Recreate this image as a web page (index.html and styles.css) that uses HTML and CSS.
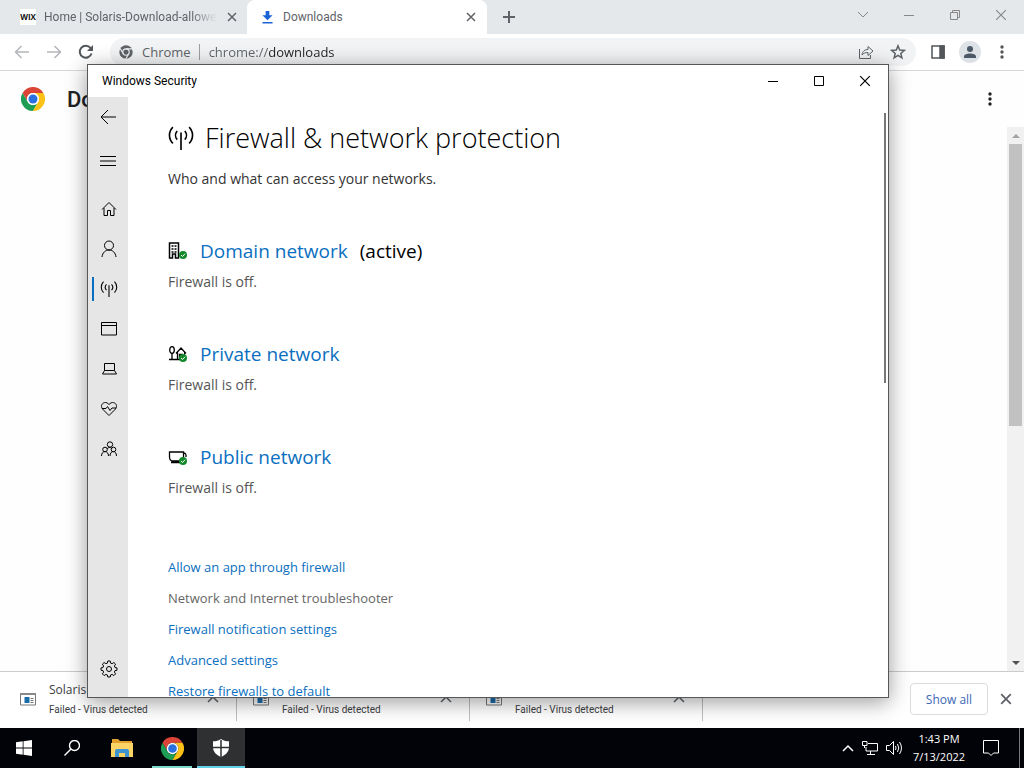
FILE: index.html
```html
<!DOCTYPE html>
<html lang="en">
<head>
    <meta charset="UTF-8">
    <meta name="viewport" content="width=device-width, initial-scale=1.0">
    <title>Downloads</title>
    <link rel="stylesheet" href="styles.css">
</head>
<body>
    <!-- Shared icons -->
    <svg class="hidden">
        <symbol id="chrome" viewBox="0 0 48 48">
            <path fill="#db4437" d="M24 12H44.8A24 24 0 0 0 3.2 12L13.6 30A12 12 0 0 1 24 12z"/>
            <path fill="#1e9e54" d="M13.6 30L3.2 12A24 24 0 0 0 24 48L34.4 30A12 12 0 0 1 13.6 30z"/>
            <path fill="#fbc116" d="M34.4 30L24 48A24 24 0 0 0 44.8 12H24A12 12 0 0 1 34.4 30z"/>
            <circle cx="24" cy="24" r="12" fill="#fff"/>
            <circle cx="24" cy="24" r="9" fill="#2a70e0"/>
        </symbol>
        <symbol id="close" viewBox="0 0 10 10"><path d="M1 1l8 8M9 1l-8 8"/></symbol>
        <symbol id="dots" viewBox="0 0 4 16"><g fill="currentColor" stroke="none"><circle cx="2" cy="3" r="1.7"/><circle cx="2" cy="8" r="1.7"/><circle cx="2" cy="13" r="1.7"/></g></symbol>
        <symbol id="chevron-up" viewBox="0 0 12 8"><path d="M1 7l5-5 5 5"/></symbol>
        <symbol id="antenna" viewBox="0 0 24 22">
            <path d="M12 6v16M8.500 4.500a6 6 0 0 0 0 8M15.500 4.500a6 6 0 0 1 0 8M4.500 1a10.500 10.500 0 0 0 0 15M19.500 1a10.500 10.500 0 0 1 0 15"/>
        </symbol>
        <symbol id="ok" viewBox="0 0 8 8"><circle cx="4" cy="4" r="4" fill="#14892c" stroke="none"/><path d="M2 4l1.500 1.500L6 2.800" stroke="#fff" fill="none"/></symbol>
        <symbol id="exe" viewBox="0 0 16 13">
            <path d="M.5.5h15v11.500H.5z" fill="#fff" stroke="#777"/><path d="M0 1h16" stroke="#888" stroke-width="2"/>
            <path d="M4.500 4h5v6h-5z" fill="#1a6ca8" stroke="none"/><path d="M10.500 5.500h3M10.500 7.500h3M10.500 9.500h3" stroke="#777"/>
        </symbol>
    </svg>

    <main class="browser">
        <div class="tabs">
            <div class="tab">
                <span class="wix">WIX</span>
                <span class="tab-title fade">Home | Solaris-Download-allowed</span>
                <button aria-label="Close tab"><svg class="ico bold" width="10" height="10"><use href="#close"/></svg></button>
            </div>
            <div class="tab active">
                <svg width="11" height="13" viewBox="0 0 12 14"><path fill="#1a62d6" d="M4 0h4v4.500h3.500L6 10 .5 4.500H4zM.5 12h11v1.500H.5z"/></svg>
                <span class="tab-title">Downloads</span>
                <button aria-label="Close tab"><svg class="ico bold" width="10" height="10"><use href="#close"/></svg></button>
            </div>
            <button class="new-tab" aria-label="New tab"><svg class="ico plus" width="12" height="12" viewBox="0 0 12 12"><path d="M6 0v12M0 6h12"/></svg></button>
            <div class="window-buttons">
                <button aria-label="Search tabs"><svg class="ico" width="12" height="8" viewBox="0 0 12 8"><path d="M1 1l5 5 5-5"/></svg></button>
                <button aria-label="Minimize"><svg class="ico" width="10" height="10" viewBox="0 0 10 10"><path d="M0 5.500h10"/></svg></button>
                <button aria-label="Restore"><svg class="ico" width="10" height="10" viewBox="0 0 10 10"><path d="M.5 2.500h7v7h-7zM2.500 2.500v-2h7v7h-2"/></svg></button>
                <button aria-label="Close"><svg class="ico" width="12" height="12"><use href="#close"/></svg></button>
            </div>
        </div>

        <div class="toolbar">
            <button class="dim" aria-label="Back"><svg class="ico bold" width="16" height="14" viewBox="0 0 16 14"><path d="M15 7H1.500M7.500 1l-6 6 6 6"/></svg></button>
            <button class="dim" aria-label="Forward"><svg class="ico bold" width="16" height="14" viewBox="0 0 16 14"><path d="M1 7h13.500M8.500 1l6 6-6 6"/></svg></button>
            <button aria-label="Reload"><svg class="ico plus" width="16" height="16" viewBox="0 0 16 16"><path d="M13.500 9.500A6 6 0 1 1 12.500 4L14 5.500"/><path d="M15 1v6H9z" fill="currentColor" stroke="none"/></svg></button>
            <div class="omnibox">
                <svg width="14" height="14" viewBox="0 0 48 48"><circle cx="24" cy="24" r="23" fill="#5f6368"/><g fill="none" stroke="#f1f3f4" stroke-width="4"><circle cx="24" cy="24" r="11"/><path d="M24 13h22M14.500 30L4 12M33.500 30L23 48"/></g></svg>
                <label for="address">Chrome</label>
                <input type="text" id="address" value="chrome://downloads">
                <button aria-label="Share"><svg class="ico" width="16" height="16" viewBox="0 0 16 16"><path d="M1.500 5v9.500h11V11M4 11c.5-4 3-5.500 6-5.500V2.500L15 7l-5 4.500v-3C7.500 8.500 5.500 9 4 11z"/></svg></button>
                <button aria-label="Bookmark"><svg class="ico bold" width="16" height="16" viewBox="0 0 16 16"><path d="M8 1.800l1.700 4.300 4.600.3-3.500 3 1.100 4.500L8 11.400l-3.900 2.500 1.100-4.500-3.500-3 4.600-.3z"/></svg></button>
            </div>
            <button class="panel" aria-label="Side panel"><svg class="ico bold" width="14" height="14" viewBox="0 0 14 14"><path d="M1 1h12v12H1z"/><path d="M9 1h4v12H9z" fill="currentColor"/></svg></button>
            <button class="avatar" aria-label="Profile"><svg width="14" height="14" viewBox="0 0 14 14" fill="#4b5866"><circle cx="7" cy="4" r="3"/><path d="M1 13v-1.500C1 9.500 4 8.500 7 8.500s6 1 6 3V13z"/></svg></button>
            <button class="menu" aria-label="Menu"><svg width="4" height="16"><use href="#dots"/></svg></button>
        </div>

        <div class="page">
            <header class="page-header">
                <svg width="24" height="24"><use href="#chrome"/></svg>
                <h2>Downloads</h2>
                <button aria-label="More actions"><svg width="4" height="16"><use href="#dots"/></svg></button>
            </header>
            <div class="scrollbar">
                <span class="arrow-up"></span>
                <span class="thumb"></span>
                <span class="arrow-down"></span>
            </div>
        </div>

        <div class="shelf">
            <div class="download">
                <svg width="16" height="13"><use href="#exe"/></svg>
                <div class="download-text"><span class="file">Solaris</span><span class="status">Failed - Virus detected</span></div>
                <button aria-label="Options"><svg class="ico bold" width="12" height="8"><use href="#chevron-up"/></svg></button>
            </div>
            <div class="download">
                <svg width="16" height="13"><use href="#exe"/></svg>
                <div class="download-text"><span class="file"></span><span class="status">Failed - Virus detected</span></div>
                <button aria-label="Options"><svg class="ico bold" width="12" height="8"><use href="#chevron-up"/></svg></button>
            </div>
            <div class="download">
                <svg width="16" height="13"><use href="#exe"/></svg>
                <div class="download-text"><span class="file"></span><span class="status">Failed - Virus detected</span></div>
                <button aria-label="Options"><svg class="ico bold" width="12" height="8"><use href="#chevron-up"/></svg></button>
            </div>
            <button class="show-all">Show all</button>
            <button class="shelf-close" aria-label="Close downloads"><svg class="ico bold" width="12" height="12"><use href="#close"/></svg></button>
        </div>
    </main>

    <footer class="taskbar">
        <button class="task" aria-label="Start"><svg width="16" height="16" viewBox="0 0 16 16" fill="#fff"><path d="M0 2.300L6.700 1.300v6.300H0zM7.500 1.200L16 0v7.600H7.500zM0 8.400h6.700v6.300L0 13.700zM7.500 8.400H16V16l-8.500-1.200z"/></svg></button>
        <button class="task" aria-label="Search"><svg class="ico" width="16" height="16" viewBox="0 0 16 16"><circle cx="10.500" cy="5.500" r="5" stroke-width="1.400"/><path d="M7 9L.5 15.500" stroke-width="1.400"/></svg></button>
        <button class="task explorer" aria-label="File Explorer"><svg width="22" height="18" viewBox="0 0 22 18"><path fill="#e0a22d" d="M1 0h6l2 2h12v5H1z"/><path fill="#fcd466" d="M0 4h22v14H0z"/><path fill="#3d94d0" d="M4 18v-6q0-2 2-2h10q2 0 2 2v6h-4v-4H8v4z"/></svg></button>
        <button class="task open" aria-label="Google Chrome"><svg width="23" height="23"><use href="#chrome"/></svg></button>
        <button class="task current" aria-label="Windows Security"><svg width="18" height="18" viewBox="0 0 18 18"><path fill="#fff" d="M9 0c2 1.500 5 2.300 8 2.300V8c0 5-3.500 8-8 10-4.500-2-8-5-8-10V2.300C4 2.300 7 1.500 9 0z"/><path stroke="#2f3032" stroke-width="1.500" d="M9 1v17M0 8.500h18"/></svg></button>
        <div class="tray">
            <button aria-label="Hidden icons"><svg class="ico bold" width="12" height="8"><use href="#chevron-up"/></svg></button>
            <button aria-label="Network"><svg class="ico" width="16" height="14" viewBox="0 0 16 14"><path d="M6 2.500h9.500v7.500H4V6M8.500 10v3M5 13.500h8M.5.5h4.500v4H.5zM2.500 4.500V7"/></svg></button>
            <button aria-label="Volume"><svg class="ico" width="17" height="14" viewBox="0 0 17 14"><path d="M.5 4.500h3l4-4v13l-4-4h-3zM9.500 5q1 2 0 4M11.500 3q2.500 4 0 8M13.500 1q4 6 0 12"/></svg></button>
            <div class="clock"><time>1:43 PM</time><time>7/13/2022</time></div>
            <button aria-label="Notifications"><svg class="ico" width="16" height="16" viewBox="0 0 16 16"><path d="M.5.5h15v12.500h-5L8 15.500 5.500 13h-5z"/></svg></button>
        </div>
    </footer>

    <section class="security">
        <header class="title-bar">
            <span>Windows Security</span>
            <div class="title-buttons">
                <button aria-label="Minimize"><svg class="ico" width="10" height="10" viewBox="0 0 10 10"><path d="M0 5.500h10"/></svg></button>
                <button aria-label="Maximize"><svg class="ico" width="10" height="10" viewBox="0 0 10 10"><path d="M.5.5h9v9h-9z"/></svg></button>
                <button aria-label="Close"><svg class="ico" width="12" height="12"><use href="#close"/></svg></button>
            </div>
        </header>
        <div class="security-body">
            <nav class="rail">
                <button class="back" aria-label="Back"><svg class="ico" width="16" height="16" viewBox="0 0 16 16"><path d="M16 8H1M8 1L1 8l7 7"/></svg></button>
                <button class="hamburger" aria-label="Open navigation"><svg class="ico" width="16" height="10" viewBox="0 0 16 10"><path d="M0 .5h16M0 5h16M0 9.500h16"/></svg></button>
                <button aria-label="Home"><svg class="ico" width="16" height="16" viewBox="0 0 16 16"><path d="M1 8.500l7-7 7 7M3 7v7.500h3.500V9.500h3v5H13V7"/></svg></button>
                <button aria-label="Account protection"><svg class="ico" width="16" height="18" viewBox="0 0 16 18"><circle cx="8" cy="5.500" r="4.500"/><path d="M1 17c.5-4.500 3.500-7 7-7s6.500 2.500 7 7"/></svg></button>
                <button class="selected" aria-label="Firewall"><svg class="ico bold" width="18" height="16"><use href="#antenna"/></svg></button>
                <button aria-label="App control"><svg class="ico" width="16" height="14" viewBox="0 0 16 14"><path d="M.5.5h15v12.500H.5zM0 3.500h16"/></svg></button>
                <button aria-label="Device security"><svg class="ico" width="16" height="12" viewBox="0 0 16 12"><path d="M3.500.5h10v7h-10zM3.500 7.500l-2 3.500h14l-2-3.500"/></svg></button>
                <button aria-label="Device health"><svg class="ico" width="16" height="14" viewBox="0 0 16 14"><path d="M8 13.500L1.500 7C-1 3.500 1.500.5 4.500.5 6.500.5 8 2.500 8 2.500S9.500.5 11.500.5c3 0 5.500 3 3 6.500zM1 6.500h4l1.500-2 2.500 4 2-2.500h4"/></svg></button>
                <button aria-label="Family options"><svg class="ico" width="16" height="16" viewBox="0 0 16 16"><circle cx="9" cy="3.500" r="2.700"/><circle cx="4" cy="8.500" r="2.300"/><circle cx="12.500" cy="8.500" r="2.300"/><path d="M.5 15c0-6 7-6 7 0M9 15c0-6 6.500-6 6.500 0M6 8c1-2 4.500-2 5 0"/></svg></button>
                <button class="settings" aria-label="Settings"><svg class="ico" width="18" height="18" viewBox="0 0 18 18"><circle cx="9" cy="9" r="2.500"/><path d="M7.800 1h2.400l.4 2.100 1.500.6 1.800-1.200 1.700 1.700-1.200 1.800.6 1.500 2 .4v2.300l-2 .4-.6 1.500 1.200 1.800-1.700 1.700-1.800-1.200-1.500.6-.4 2H7.800l-.4-2-1.500-.6-1.800 1.200-1.700-1.700 1.200-1.800-.6-1.500-2-.4V7.900l2-.4.6-1.500-1.200-1.800 1.700-1.700 1.800 1.200 1.500-.6z"/></svg></button>
            </nav>
            <div class="content">
                <h1><svg class="ico" width="26" height="24"><use href="#antenna"/></svg>Firewall &amp; network protection</h1>
                <p class="intro">Who and what can access your networks.</p>

                <div class="network">
                    <h3>
                        <svg class="ico" width="20" height="18" viewBox="0 0 20 18"><path d="M1.500 1h9v15h-3v-4h-3v4h-3z" stroke-width="1.500"/><path d="M3.500 4h2m1 0h2m-5 3h2m1 0h2m-5 3h2m1 0h2" stroke-width="1.300"/><use href="#ok" x="11" y="9" width="8" height="8"/></svg>
                        <a href="#">Domain network</a> <span>(active)</span>
                    </h3>
                    <p>Firewall is off.</p>
                </div>
                <div class="network">
                    <h3>
                        <svg class="ico" width="20" height="18" viewBox="0 0 20 18"><path d="M4 8v6.500M1 14.500h11M9.500 14V7.500M8 8.500l5-5.500 5 5.500M11.500 14V9.500H15" stroke-width="1.300"/><ellipse cx="4" cy="5" rx="2.300" ry="3.300" stroke-width="1.300"/><path d="M16.500 7v4"/><use href="#ok" x="11" y="9" width="8" height="8"/></svg>
                        <a href="#">Private network</a>
                    </h3>
                    <p>Firewall is off.</p>
                </div>
                <div class="network">
                    <h3>
                        <svg class="ico" width="20" height="18" viewBox="0 0 20 18"><path d="M1.500 4h14v5c0 2-1 4-3.500 4H5c-2.500 0-3.500-2-3.500-4zM15.500 5q3 0 2.500 4M3 14.500h9" stroke-width="1.300"/><use href="#ok" x="11" y="9" width="8" height="8"/></svg>
                        <a href="#">Public network</a>
                    </h3>
                    <p>Firewall is off.</p>
                </div>

                <div class="links">
                    <a href="#">Allow an app through firewall</a>
                    <a href="#" class="muted">Network and Internet troubleshooter</a>
                    <a href="#">Firewall notification settings</a>
                    <a href="#">Advanced settings</a>
                    <a href="#">Restore firewalls to default</a>
                </div>
            </div>
            <span class="content-scroll"></span>
        </div>
    </section>
</body>
</html>
```
FILE: styles.css
```css
* {
    box-sizing: border-box;
}
body {
    margin: 0;
    height: 100vh;
    display: flex;
    flex-direction: column;
    overflow: hidden;
    position: relative;
    font-family: "Open Sans", "Noto Sans", sans-serif;
    font-size: 12px;
    color: #202124;
    background: #fff;
}
h1, h2, h3, p {
    margin: 0;
    font-weight: normal;
}
a {
    color: #0a6fc0;
    text-decoration: none;
}
button {
    display: flex;
    align-items: center;
    justify-content: center;
    flex: none;
    padding: 0;
    border: none;
    background: none;
    color: inherit;
    font: inherit;
}
svg {
    flex: none;
}
.hidden {
    display: none;
}
.ico {
    fill: none;
    stroke: currentColor;
    stroke-width: 1;
}
.bold {
    stroke-width: 1.5;
}
.plus {
    stroke-width: 2;
}

/* Browser */
.browser {
    flex: 1;
    min-height: 0;
    display: flex;
    flex-direction: column;
}
.tabs {
    display: flex;
    height: 34px;
    background: #e5e8eb;
    color: #5f6368;
}
.tab {
    display: flex;
    align-items: center;
    width: 247px;
    padding: 0 9px 0 20px;
}
.tab.active {
    width: 240px;
    padding: 0 10px 0 15px;
    border-radius: 8px 8px 0 0;
    background: #fff;
}
.tab button {
    width: 12px;
    height: 20px;
}
.wix {
    width: 16px;
    height: 16px;
    background: #fff;
    color: #111;
    font-size: 8px;
    font-weight: bold;
    line-height: 16px;
    text-align: center;
}
.tab-title {
    flex: 1;
    min-width: 0;
    margin: 0 9px 0 8px;
    overflow: hidden;
    white-space: nowrap;
    font-family: Roboto, sans-serif;
    line-height: 18px;
}
.active .tab-title {
    margin-left: 10px;
}
.fade {
    -webkit-mask-image: linear-gradient(90deg, #000 85%, transparent);
    mask-image: linear-gradient(90deg, #000 85%, transparent);
}
.new-tab {
    width: 44px;
}
.window-buttons {
    display: flex;
    height: 30px;
    margin-left: auto;
    color: #888;
}
.window-buttons button {
    width: 46px;
}
.toolbar {
    display: flex;
    align-items: center;
    height: 37px;
    padding: 0 12px 0 6px;
    border-bottom: 1px solid #d5d7d9;
    color: #53575b;
}
.toolbar > button {
    width: 32px;
    height: 28px;
}
.toolbar .dim {
    color: #b4b6b9;
}
.omnibox {
    flex: 1;
    min-width: 0;
    display: flex;
    align-items: center;
    height: 28px;
    margin: 0 12px 0 8px;
    padding: 0 2px 0 9px;
    border-radius: 14px;
    background: #f1f3f4;
    color: #5f6368;
    font-size: 13px;
}
.omnibox label {
    margin-left: 9px;
    padding-right: 8px;
    border-right: 1px solid #9b9ea2;
    line-height: 16px;
}
.omnibox input {
    flex: 1;
    min-width: 0;
    padding: 0 0 0 9px;
    border: none;
    outline: none;
    font: inherit;
    color: #202124;
    background: linear-gradient(90deg, #5f6368 69px, #202124 69px);
    -webkit-background-clip: text;
    background-clip: text;
    -webkit-text-fill-color: transparent;
}
.omnibox button {
    width: 32px;
}
.toolbar .panel {
    width: 20px;
}
.toolbar .avatar {
    width: 22px;
    height: 22px;
    margin: 0 11px;
    border-radius: 50%;
    background: #dde2e6;
}
.toolbar .menu {
    width: 20px;
}
.page {
    flex: 1;
    min-height: 0;
    display: flex;
    flex-direction: column;
    background: #fefefe;
}
.page-header {
    display: flex;
    align-items: center;
    height: 56px;
    padding: 0 24px 0 21px;
}
.page-header h2 {
    flex: 1;
    margin-left: 22px;
    font-family: Roboto, sans-serif;
    font-size: 22px;
    font-weight: 500;
}
.page-header button {
    width: 20px;
}
.scrollbar {
    flex: 1;
    align-self: flex-end;
    display: flex;
    flex-direction: column;
    width: 17px;
    padding: 6px 2px;
    background: #f1f1f1;
}
.arrow-up, .arrow-down {
    align-self: center;
    border: 4px solid transparent;
}
.arrow-up {
    margin: 1px 0 6px;
    border-top-width: 0;
    border-bottom-color: #a3a3a3;
}
.arrow-down {
    margin-top: auto;
    border-bottom-width: 0;
    border-top-color: #505050;
}
.thumb {
    height: 53%;
    background: #c1c1c1;
}
.shelf {
    display: flex;
    align-items: center;
    height: 57px;
    padding: 0 8px 2px 0;
    border-top: 1px solid #c9cbcd;
    background: #fff;
    color: #5f6368;
}
.download {
    display: flex;
    align-items: center;
    width: 233px;
    height: 44px;
    padding: 0 17px 0 16px;
    border-right: 1px solid #bdbfc1;
}
.download:first-child {
    width: 237px;
    padding-left: 20px;
}
.download-text {
    flex: 1;
    display: flex;
    flex-direction: column;
    margin-left: 13px;
    padding-top: 2px;
    color: #3c4043;
}
.file {
    height: 20px;
    line-height: 20px;
}
.status {
    font-family: Roboto, sans-serif;
    font-size: 10px;
    line-height: 20px;
    white-space: nowrap;
}
.show-all {
    width: 78px;
    height: 32px;
    margin-left: auto;
    border: 1px solid #dadce0;
    border-radius: 4px;
    color: #3c67b5;
}
.shelf-close {
    width: 20px;
    height: 20px;
    margin-left: 8px;
}

/* Taskbar */
.taskbar {
    display: flex;
    height: 40px;
    background: #020308;
    color: #fff;
}
.task {
    width: 48px;
    border-bottom: 2px solid transparent;
    border-top: 2px solid transparent;
}
.explorer {
    width: 52px;
}
.open {
    width: 40px;
    margin: 0 5px 0 4px;
    border-bottom-color: #7fd8cc;
}
.current {
    border-bottom-color: #62d2e8;
    background: #2f3032;
    border-top-color: #2f3032;
}
.tray {
    display: flex;
    align-items: center;
    gap: 8px;
    margin-left: auto;
    margin-right: 4px;
    padding-right: 20px;
    border-right: 1px solid #777;
}
.clock {
    width: 56px;
    display: flex;
    flex-direction: column;
    margin-right: 8px;
    font-size: 11px;
    line-height: 18px;
    text-align: center;
}

/* Windows Security */
.security {
    position: absolute;
    top: 64px;
    right: 135px;
    bottom: 70px;
    left: 87px;
    display: flex;
    flex-direction: column;
    border: 1px solid #55585b;
    background: #fff;
    color: #000;
    box-shadow: 0 4px 20px rgba(0, 0, 0, 0.4);
}
.title-bar {
    display: flex;
    align-items: center;
    height: 32px;
    padding-left: 14px;
    font-family: Roboto, sans-serif;
}
.title-buttons {
    display: flex;
    height: 32px;
    margin-left: auto;
}
.title-buttons button {
    width: 46px;
}
.security-body {
    flex: 1;
    min-height: 0;
    display: flex;
}
.rail {
    display: flex;
    flex-direction: column;
    width: 40px;
    padding-bottom: 8px;
    background: #e6e6e6;
}
.rail button {
    height: 40px;
    padding-left: 2px;
}
.rail .back, .rail .hamburger {
    padding-left: 0;
}
.rail .hamburger {
    height: 48px;
    margin-bottom: 4px;
}
.rail .selected {
    height: 24px;
    margin: 8px 0 8px 4px;
    padding-right: 4px;
    padding-left: 0;
    border-left: 2px solid #0a6fc0;
}
.rail .settings {
    margin-top: auto;
}
.content {
    flex: 1;
    min-width: 0;
    padding: 21px 20px 0 40px;
    overflow: hidden;
}
h1 {
    display: flex;
    align-items: center;
    gap: 11px;
    font-size: 27px;
    font-weight: 300;
    line-height: 40px;
}
h1 .ico {
    stroke-width: 1.5;
}
.intro {
    margin-top: 10px;
    font-size: 14px;
    line-height: 22px;
    color: #333;
}
.network {
    margin-top: 46px;
}
h3 {
    display: flex;
    align-items: center;
    gap: 12px;
    font-size: 19px;
    line-height: 30px;
}
.network p {
    margin-top: 5px;
    font-size: 14px;
    line-height: 22px;
    color: #555;
}
.links {
    display: flex;
    flex-direction: column;
    align-items: flex-start;
    margin-top: 53px;
    font-size: 13px;
    line-height: 31px;
}
.links .muted {
    color: #666;
}
.content-scroll {
    width: 2px;
    height: 45%;
    margin: 16px 2px 0 0;
    background: #777;
}
```
